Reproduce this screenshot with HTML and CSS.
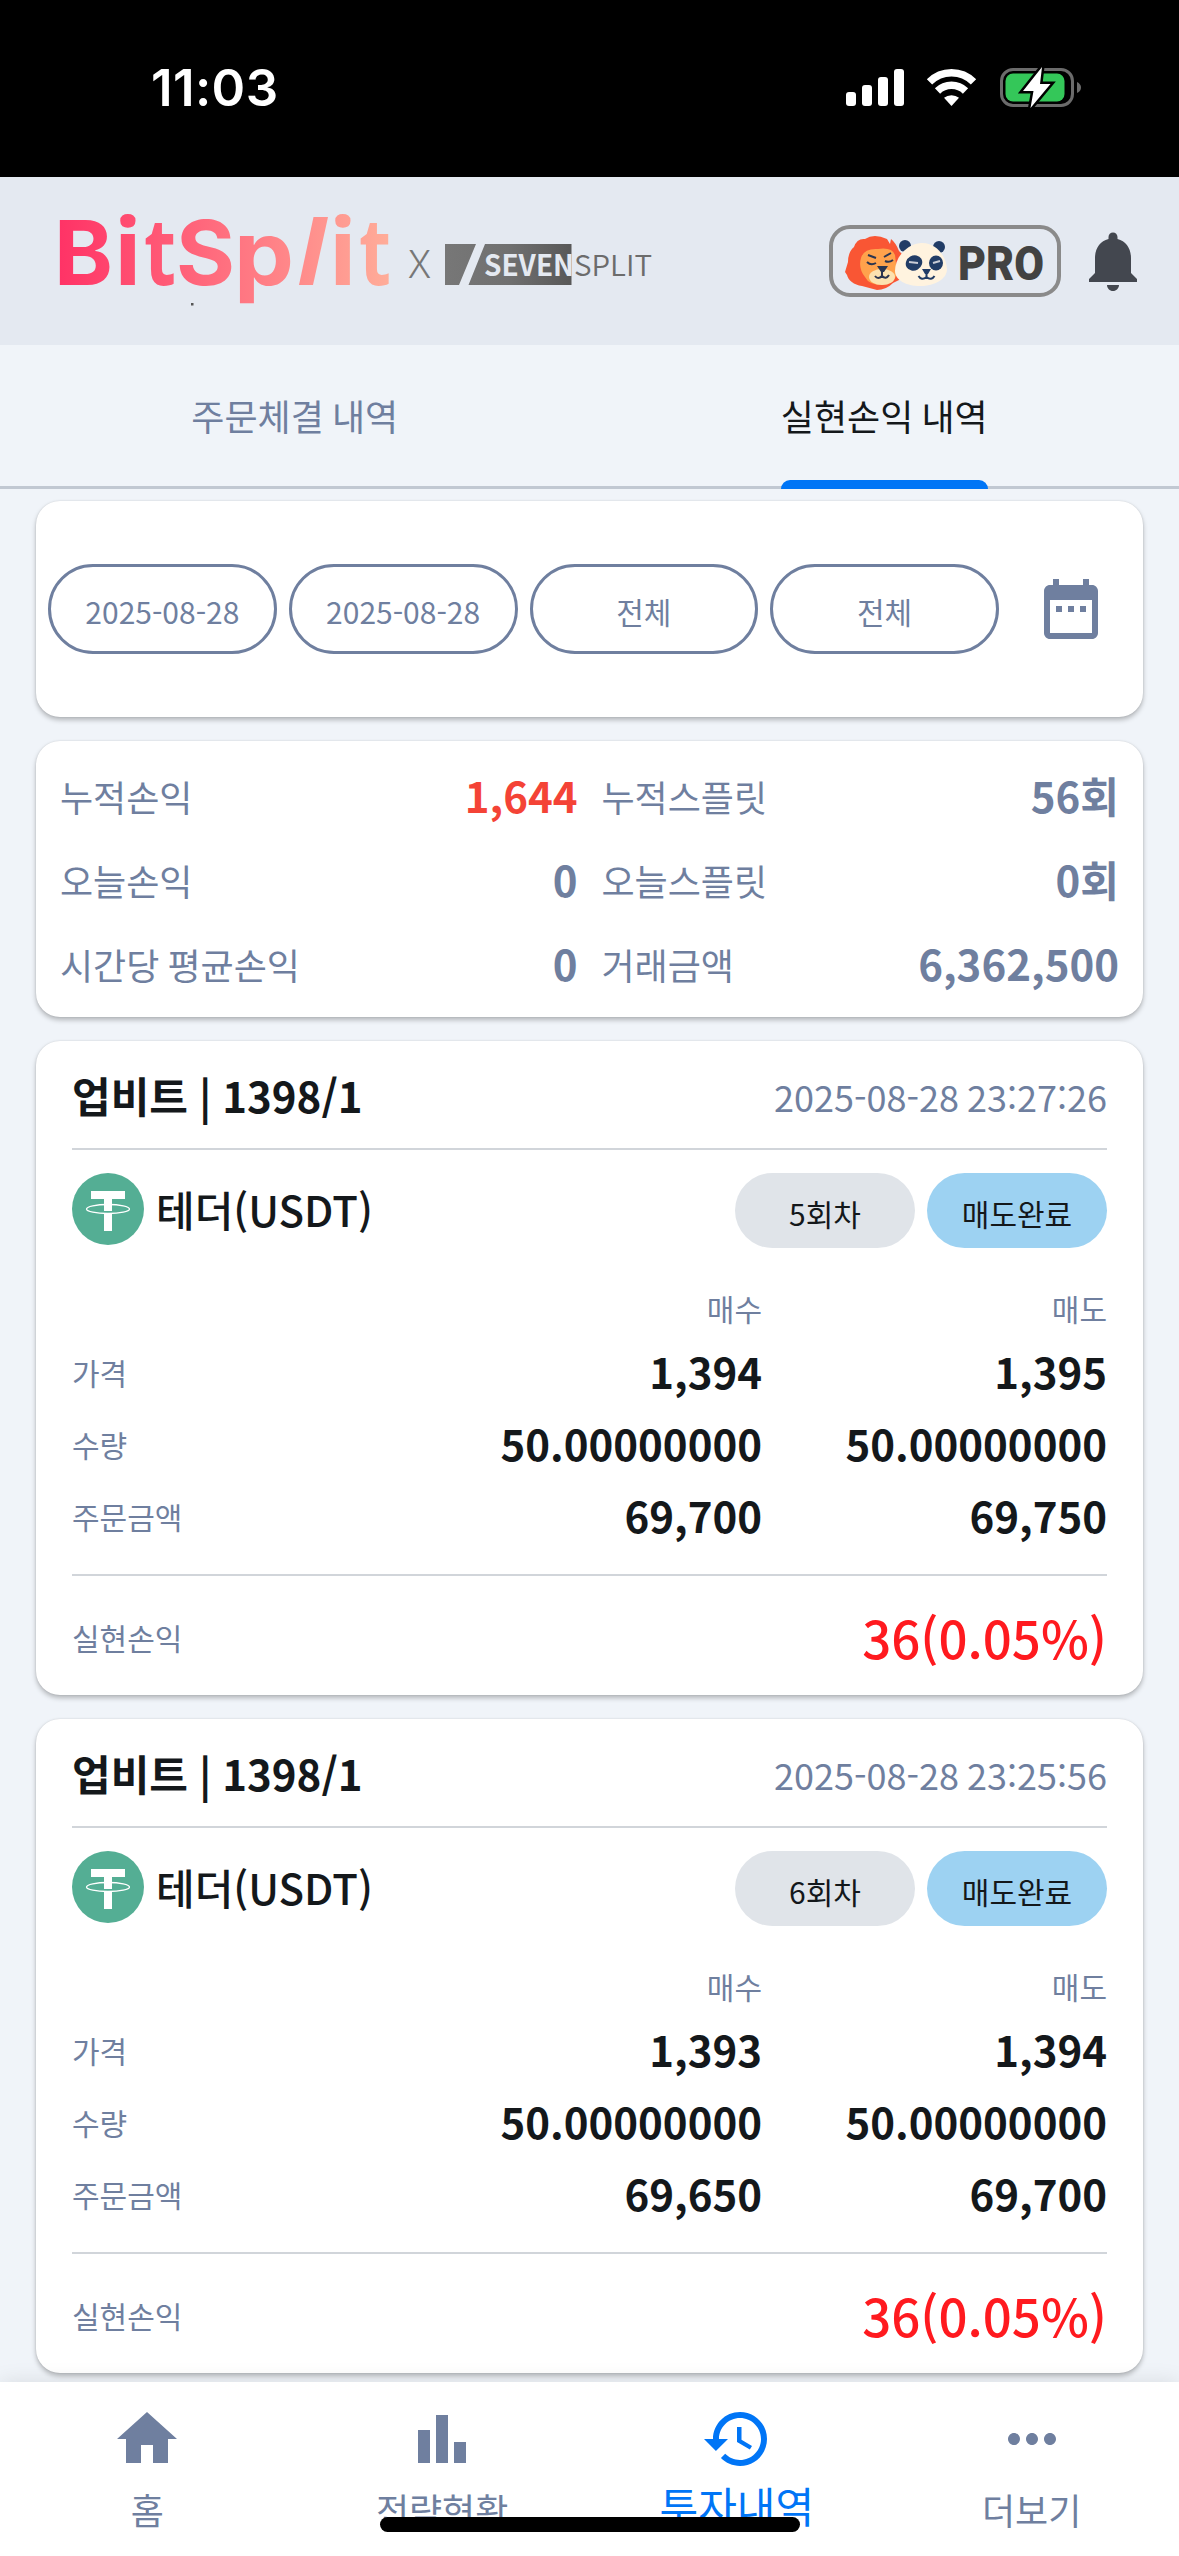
FILE: index.html
```html
<!DOCTYPE html>
<html lang="ko">
<head>
<meta charset="utf-8">
<title>BitSplit</title>
<link rel="stylesheet" href="styles.css">
</head>
<body>
<div class="screen">
  <header class="status">
    <span class="clock">11:03</span>
    <svg class="status-icons" width="240" height="48" viewBox="0 0 240 48">
      <g fill="#fff">
        <rect x="6" y="28" width="10" height="14" rx="3"/>
        <rect x="22" y="21" width="10" height="21" rx="3"/>
        <rect x="38" y="13" width="10" height="29" rx="3"/>
        <rect x="54" y="5" width="10" height="37" rx="3"/>
        <path d="M111.500 42l-7.500-8.200a12 12 0 0 1 15 0z"/>
      </g>
      <g fill="none" stroke="#fff" stroke-width="7.500">
        <path d="M97.500 27a20 20 0 0 1 28 0"/>
        <path d="M89.500 17.800a31 31 0 0 1 44 0"/>
      </g>
      <rect x="161.500" y="5.500" width="71" height="36" rx="11.500" fill="none" stroke="#6b6b6b" stroke-width="3"/>
      <rect x="165.500" y="9.500" width="59" height="28" rx="7.500" fill="#34c759"/>
      <path d="M237 18v11q4-2 4-5.500t-4-5.500z" fill="#6b6b6b"/>
      <path d="M202 3l-19 24h10.500l-3 17 20-24h-10.500z" fill="#fff" stroke="#000" stroke-width="5" paint-order="stroke"/>
    </svg>
  </header>

  <div class="appbar">
    <svg class="logo" width="600" height="100" viewBox="0 0 600 100">
      <defs>
        <linearGradient id="pink" gradientUnits="userSpaceOnUse" x1="0" y1="0" x2="330" y2="0">
          <stop offset="0" stop-color="#ff3366"/><stop offset="1" stop-color="#ffad99"/>
        </linearGradient>
        <linearGradient id="gray" x1="0" x2="1" y1="0" y2="0">
          <stop offset="0" stop-color="#777"/><stop offset=".5" stop-color="#707070"/><stop offset="1" stop-color="#585858"/>
        </linearGradient>
      </defs>
      <g class="wordmark" fill="url(#pink)">
        <text x="-6" y="74">B</text>
        <text class="round" x="53.500" y="74">i</text>
        <text class="round" x="84" y="74" textLength="32" lengthAdjust="spacingAndGlyphs">t</text>
        <text x="116" y="74" textLength="59" lengthAdjust="spacingAndGlyphs">S</text>
        <text x="174" y="74" textLength="60" lengthAdjust="spacingAndGlyphs">p</text>
        <path d="M253.500 6h14.500l-15 68h-14z"/>
        <text class="round" x="268.500" y="74">i</text>
        <text class="round" x="299" y="74" textLength="32" lengthAdjust="spacingAndGlyphs">t</text>
      </g>
      <text class="cross" x="348" y="67" textLength="23" lengthAdjust="spacingAndGlyphs">X</text>
      <path d="M385 33h31l-17 41h-14zM425 33h86.500v41h-103z" fill="url(#gray)"/>
      <text class="seven" x="424" y="64.500" textLength="90" lengthAdjust="spacingAndGlyphs">SEVEN</text>
      <text class="split" x="514" y="64.500" textLength="78" lengthAdjust="spacingAndGlyphs">SPLIT</text>
      <rect x="131" y="92" width="2.500" height="2.500" fill="#555"/>
    </svg>
    <div class="appbar-actions">
      <div class="badge">
        <svg width="108" height="60" viewBox="0 0 108 60">
          <path d="M4 41l3-10q0-10 6-15 3-9 11-8 9-6 22 0l3 5 1-5q5 4 8 12l4 4-2 24-8 4q-7 7-16 7l-15-4c-8-1-14-6-15-11z" fill="#f95634"/>
          <path d="M20 27q3-10 17-9 14-2 17 6l2 18q-2 10-15 12-13 0-17-8-7-9-4-19z" fill="#ffa24c"/>
          <ellipse cx="41" cy="46" rx="13" ry="8" fill="#fce2b0"/>
          <path d="M27 24l8 3M43 26l7-4M26 31q4 4 9 1M44 30q4 2 8-1" fill="none" stroke="#2b3550" stroke-width="2"/>
          <path d="M36 35h11l-4 6h-3z" fill="#2b3550"/>
          <path d="M41 40v5m-7 0q3 4 7 0 4 4 7-1" fill="none" stroke="#2b3550" stroke-width="2"/>
          <circle cx="64" cy="15" r="6" fill="#213c66"/><circle cx="98" cy="16" r="6" fill="#213c66"/>
          <path d="M80 12c14-1 25 12 26 26 0 10-12 17-27 17-14 0-25-6-25-15 0-14 12-27 26-28z" fill="#fff3df"/>
          <ellipse cx="73" cy="32" rx="8.500" ry="7.500" transform="rotate(-30 73 32)" fill="#213c66"/>
          <ellipse cx="95" cy="32" rx="7" ry="7.500" fill="#213c66"/>
          <path d="M68 31l9 1M92 32l7-2" stroke="#c9ccd6" stroke-width="2"/>
          <path d="M81 38h9l-3 5h-3z" fill="#213c66"/>
          <path d="M85.500 41v5m-8-1q3 5 8 1 5 4 8-1" fill="none" stroke="#213c66" stroke-width="2"/>
        </svg>
        <svg class="pro-box" width="98" height="60" viewBox="0 0 98 60"><text class="pro" x="0" y="49" textLength="86" lengthAdjust="spacingAndGlyphs">PRO</text></svg>
      </div>
      <svg class="bell" width="72" height="72" viewBox="0 0 24 24"><path d="M12 22c1.100 0 2-.9 2-2h-4c0 1.100.89 2 2 2zm6-6v-5c0-3.070-1.640-5.640-4.500-6.320V4c0-.83-.67-1.500-1.500-1.500s-1.500.67-1.500 1.500v.68C7.630 5.360 6 7.920 6 11v5l-2 2v1h16v-1l-2-2z"/></svg>
    </div>
  </div>

  <nav class="tabs">
    <div class="tab"><span class="tab-label">주문체결 내역</span></div>
    <div class="tab tab-active"><span class="tab-label">실현손익 내역</span></div>
  </nav>

  <main class="content">
    <section class="card filters">
      <div class="filter">2025-08-28</div>
      <div class="filter">2025-08-28</div>
      <div class="filter">전체</div>
      <div class="filter">전체</div>
      <div class="calendar"><svg width="72" height="72" viewBox="0 0 24 24"><path d="M9 11H7v2h2v-2zm4 0h-2v2h2v-2zm4 0h-2v2h2v-2zm2-7h-1V2h-2v2H8V2H6v2H5c-1.110 0-1.990.9-1.990 2L3 20c0 1.100.89 2 2 2h14c1.100 0 2-.9 2-2V6c0-1.100-.9-2-2-2zm0 16H5V9h14v11z"/></svg></div>
    </section>

    <section class="card summary">
      <div class="stat"><span>누적손익</span><b class="up">1,644</b></div>
      <div class="stat"><span>누적스플릿</span><b>56회</b></div>
      <div class="stat"><span>오늘손익</span><b>0</b></div>
      <div class="stat"><span>오늘스플릿</span><b>0회</b></div>
      <div class="stat"><span>시간당 평균손익</span><b>0</b></div>
      <div class="stat"><span>거래금액</span><b>6,362,500</b></div>
    </section>

    <article class="card trade">
      <div class="trade-head"><h2>업비트 | 1398/1</h2><time>2025-08-28 23:27:26</time></div>
      <div class="coin-row">
        <svg class="coin" width="72" height="72" viewBox="0 0 72 72"><circle cx="36" cy="36" r="36" fill="#54ae94"/><path d="M19 18h34v8H40v12h-8V26H19zM32 40h8v18h-8z" fill="#fff"/><ellipse cx="36" cy="36" rx="21.500" ry="4.500" fill="none" stroke="#fff" stroke-width="1.300"/></svg>
        <span class="coin-name">테더(USDT)</span>
        <span class="chip">5회차</span><span class="chip chip-done">매도완료</span>
      </div>
      <div class="grid">
        <i></i><span class="col">매수</span><span class="col">매도</span>
        <span>가격</span><b>1,394</b><b>1,395</b>
        <span>수량</span><b>50.00000000</b><b>50.00000000</b>
        <span>주문금액</span><b>69,700</b><b>69,750</b>
      </div>
      <div class="profit"><span>실현손익</span><strong>36(0.05%)</strong></div>
    </article>

    <article class="card trade">
      <div class="trade-head"><h2>업비트 | 1398/1</h2><time>2025-08-28 23:25:56</time></div>
      <div class="coin-row">
        <svg class="coin" width="72" height="72" viewBox="0 0 72 72"><circle cx="36" cy="36" r="36" fill="#54ae94"/><path d="M19 18h34v8H40v12h-8V26H19zM32 40h8v18h-8z" fill="#fff"/><ellipse cx="36" cy="36" rx="21.500" ry="4.500" fill="none" stroke="#fff" stroke-width="1.300"/></svg>
        <span class="coin-name">테더(USDT)</span>
        <span class="chip">6회차</span><span class="chip chip-done">매도완료</span>
      </div>
      <div class="grid">
        <i></i><span class="col">매수</span><span class="col">매도</span>
        <span>가격</span><b>1,393</b><b>1,394</b>
        <span>수량</span><b>50.00000000</b><b>50.00000000</b>
        <span>주문금액</span><b>69,650</b><b>69,700</b>
      </div>
      <div class="profit"><span>실현손익</span><strong>36(0.05%)</strong></div>
    </article>
  </main>

  <nav class="bottom">
    <div class="item"><svg width="72" height="72" viewBox="0 0 24 24"><path d="M10 20v-6h4v6h5v-8h3L12 3 2 12h3v8z"/></svg><span>홈</span></div>
    <div class="item"><svg width="72" height="72" viewBox="0 0 24 24"><path d="M4 9h4v11H4zm12 4h4v7h-4zm-6-9h4v16h-4z"/></svg><span>전략현황</span></div>
    <div class="item item-active"><svg width="72" height="72" viewBox="0 0 24 24"><path d="M13 3c-4.970 0-9 4.030-9 9H1l3.890 3.890.07.14L9 12H6c0-3.870 3.130-7 7-7s7 3.130 7 7-3.130 7-7 7c-1.930 0-3.680-.79-4.940-2.060l-1.420 1.420C8.270 19.990 10.510 21 13 21c4.970 0 9-4.030 9-9s-4.030-9-9-9zm-1 5v5l4.280 2.540.72-1.210-3.500-2.080V8H12z"/></svg><span>투자내역</span></div>
    <div class="item"><svg width="72" height="72" viewBox="0 0 24 24"><path d="M6 10c-1.100 0-2 .9-2 2s.9 2 2 2 2-.9 2-2-.9-2-2-2zm12 0c-1.100 0-2 .9-2 2s.9 2 2 2 2-.9 2-2-.9-2-2-2zm-6 0c-1.100 0-2 .9-2 2s.9 2 2 2 2-.9 2-2-.9-2-2-2z"/></svg><span>더보기</span></div>
    <div class="home-bar"></div>
  </nav>
</div>
</body>
</html>
```
FILE: styles.css
```css
* { box-sizing: border-box; }

body {
  margin: 0;
  background: #f0f4f9;
  color: #14181b;
  font-family: "Noto Sans CJK KR", sans-serif;
  word-spacing: -2px;
}

.screen {
  display: flex;
  flex-direction: column;
  width: 1179px;
  height: 2556px;
  overflow: hidden;
}

/* status bar */
.status {
  flex: none;
  display: flex;
  justify-content: space-between;
  align-items: center;
  height: 177px;
  padding: 0 99px 2px 151px;
  background: #000;
  color: #fff;
}
.clock { font: 600 51px/60px Inter, sans-serif; letter-spacing: .4px; }
.status-icons { overflow: visible; }

/* app bar */
.appbar {
  flex: none;
  display: flex;
  justify-content: space-between;
  height: 168px;
  padding: 34px 30px 0 60px;
  background: #e4e9f1;
}
.logo { overflow: visible; }
.wordmark text { font: 700 89px Inter, sans-serif; }
.wordmark .round { font: 700 94px "Open Sans", sans-serif; }
.cross { font: 300 38px "Noto Sans CJK KR", sans-serif; fill: #777; }
.seven { font: 700 29px "Noto Sans CJK KR", sans-serif; fill: #e4e9f1; }
.split { font: 350 29px "Noto Sans CJK KR", sans-serif; fill: #6c6c6c; }
.appbar-actions { display: flex; gap: 16px; padding-top: 14px; }
.badge {
  display: flex;
  gap: 9px;
  width: 232px;
  height: 72px;
  padding: 2px 0 0 8px;
  border: 4px solid #8a8a8a;
  border-radius: 21px;
}
.badge svg { flex: none; }
.pro-box { overflow: visible; }
.pro { font: 900 49px Roboto, sans-serif; fill: #424242; }
.bell { fill: #43474f; }

/* tabs */
.tabs {
  flex: none;
  display: flex;
  height: 144px;
  border-bottom: 3px solid #c1c8d2;
}
.tab {
  flex: 1;
  display: flex;
  justify-content: center;
  height: 144px;
  font-size: 36px;
  line-height: 141px;
  color: #6f7f9f;
}
.tab-active { color: #14181b; }
.tab-label {
  display: grid;
  grid-template-rows: 135px 9px;
  height: 144px;
}
.tab-active .tab-label::after {
  content: "";
  border-radius: 9px 9px 0 0;
  background: #0075f6;
}

/* cards */
.content {
  flex: 1;
  display: flex;
  flex-direction: column;
  gap: 24px;
  min-height: 0;
  padding: 12px 36px 0;
}
.card {
  flex: none;
  border-radius: 24px;
  background: #fff;
  box-shadow: 0 3px 5px rgba(0, 0, 0, .25), 0 0 2px rgba(0, 0, 0, .12);
}

.filters {
  display: flex;
  align-items: center;
  gap: 12px;
  height: 216px;
  padding: 0 12px;
}
.filter {
  flex: 1;
  height: 90px;
  border: 3px solid #6f7f9f;
  border-radius: 45px;
  font-size: 30px;
  line-height: 88px;
  text-align: center;
  color: #6f7f9f;
}
.calendar {
  width: 120px;
  height: 72px;
  padding-left: 24px;
  fill: #6f7f9f;
}

.summary {
  display: grid;
  grid-template-columns: 1fr 1fr;
  grid-auto-rows: 84px;
  height: 276px;
  padding: 12px;
}
.stat {
  display: flex;
  justify-content: space-between;
  align-items: center;
  padding: 0 12px;
  font-size: 36px;
  color: #6f7f9f;
}
.stat span { padding-top: 1px; }
.stat b { padding-bottom: 2px; font-size: 42px; }
.stat .up { color: #f44336; }

/* trades */
.trade {
  height: 654px;
  padding: 0 36px;
}
.trade-head {
  display: flex;
  justify-content: space-between;
  align-items: center;
  height: 109px;
  border-bottom: 2px solid #d1d5da;
}
.trade-head h2 { margin: 0; font-size: 42px; font-weight: 700; word-spacing: -.8px; }
.trade-head time { padding-top: 2px; font-size: 36px; color: #6f7f9f; }
.coin-row {
  display: flex;
  align-items: flex-start;
  gap: 12px;
  height: 99px;
  padding-top: 23px;
}
.coin-name {
  flex: 1;
  font-size: 42px;
  font-weight: 500;
  line-height: 72px;
}
.chip {
  width: 180px;
  height: 75px;
  border-radius: 38px;
  background: #e0e4e9;
  font-size: 30px;
  line-height: 81px;
  text-align: center;
}
.chip-done { background: #9dd2f2; }
.grid {
  display: grid;
  grid-template-columns: repeat(3, 1fr);
  grid-template-rows: 57px repeat(3, 72px);
  align-items: center;
  height: 327px;
  padding-top: 30px;
  border-bottom: 2px solid #d1d5da;
}
.grid span, .profit span { font-size: 30px; color: #6f7f9f; }
.grid .col, .grid b { text-align: right; }
.grid b { padding-bottom: 3px; font-size: 42px; }
.profit {
  display: flex;
  justify-content: space-between;
  align-items: center;
  height: 119px;
  padding-top: 3px;
}
.profit strong { font-size: 51px; font-weight: 500; color: #ff1a1f; }

/* bottom navigation */
.bottom {
  position: relative;
  flex: none;
  display: flex;
  height: 174px;
  padding-top: 21px;
  background: #fff;
  box-shadow: 0 0 20px rgba(0, 0, 0, .1);
}
.item {
  flex: 1;
  display: flex;
  flex-direction: column;
  align-items: center;
  font-size: 36px;
  line-height: 54px;
  color: #6f7f9f;
  fill: currentColor;
}
.item svg { margin-bottom: 7px; }
.item-active { font-size: 42px; color: #0075f6; }
.item-active svg { margin-bottom: 3px; }
.home-bar {
  position: absolute;
  left: 380px;
  top: 135px;
  width: 420px;
  height: 15px;
  border-radius: 8px;
  background: #000;
}
```
